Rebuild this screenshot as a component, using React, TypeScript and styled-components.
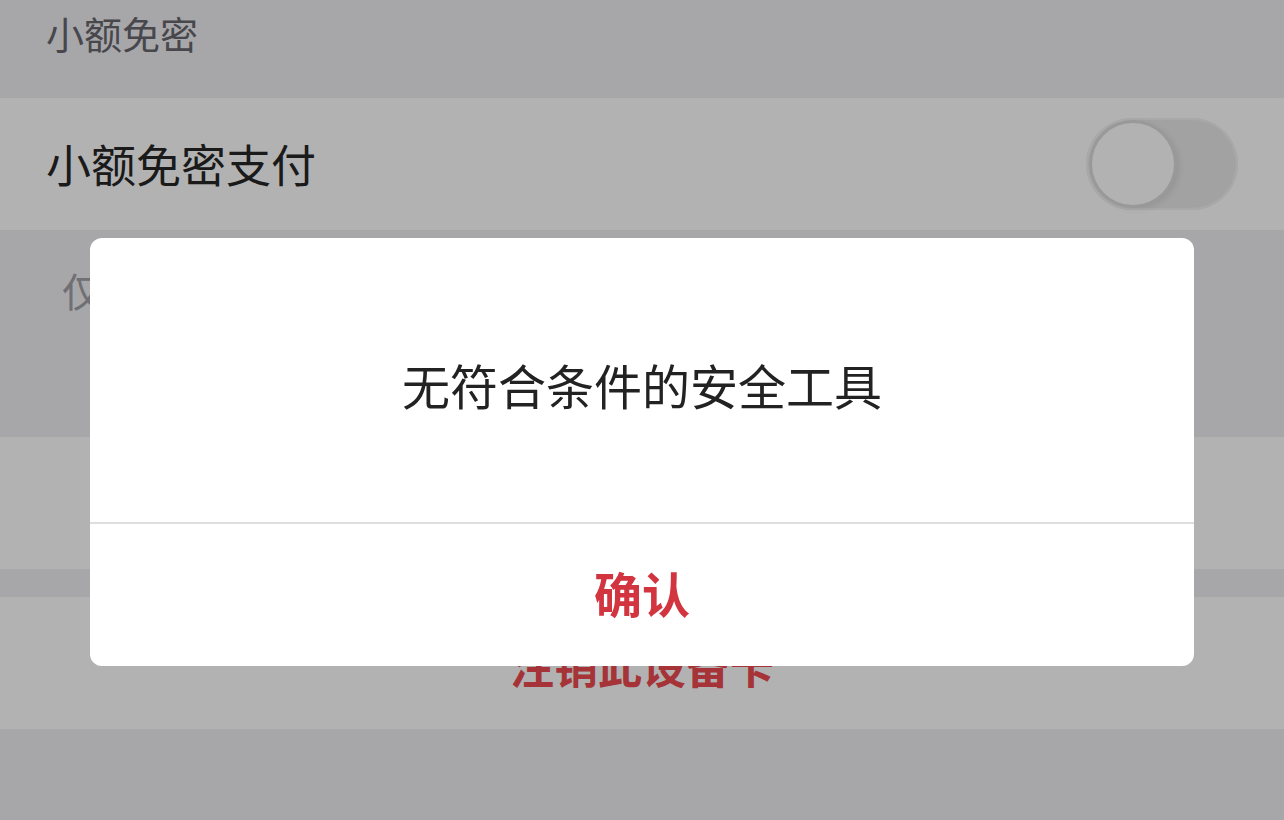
import styled, { createGlobalStyle } from "styled-components";

const colors = {
    pageBg: "#f0eff4",
    rowBg: "#ffffff",
    headerText: "#66666d",
    rowText: "#262626",
    hintText: "#a0a0a7",
    danger: "#ec4a4f",
    dialogText: "#222222",
    divider: "#dedede",
    confirm: "#d23440",
    trackOff: "#e9e9ea",
};

const GlobalStyle = createGlobalStyle`
    html, body {
        margin: 0;
        padding: 0;
        width: 1284px;
        height: 820px;
        overflow: hidden;
        background: ${colors.pageBg};
        font-family: "Noto Sans CJK SC", "Noto Sans", sans-serif;
    }
    * {
        box-sizing: border-box;
    }
`;

const Page = styled.div`
    display: flex;
    flex-direction: column;
    width: 1284px;
    height: 820px;
    background: ${colors.pageBg};
`;

const SectionHeader = styled.div`
    height: 98px;
    padding: 10px 46px 0;
    font-size: 38px;
    line-height: 46px;
    color: ${colors.headerText};
`;

const Row = styled.div<{ $centered?: boolean }>`
    height: 132px;
    padding: 0 46px;
    display: flex;
    align-items: center;
    justify-content: ${(p) => (p.$centered ? "center" : "space-between")};
    background: ${colors.rowBg};
`;

const RowLabel = styled.span`
    font-size: 45px;
    line-height: 1.2;
    color: ${colors.rowText};
`;

const DangerLabel = styled.span`
    font-size: 44px;
    font-weight: 700;
    line-height: 1.2;
    color: ${colors.danger};
    padding-top: 4px;
`;

const Hint = styled.div`
    height: 207px;
    padding: 36px 62px 0;
    font-size: 40px;
    line-height: 48px;
    color: ${colors.hintText};
`;

const Gap = styled.div`
    height: 28px;
`;

const Track = styled.div`
    position: relative;
    width: 152px;
    height: 92px;
    border-radius: 46px;
    background: ${colors.trackOff};
    box-shadow: inset 0 0 0 2px #f2f2f3;
`;

const Knob = styled.div`
    position: absolute;
    top: 5px;
    left: 6px;
    width: 82px;
    height: 82px;
    border-radius: 50%;
    background: #ffffff;
    box-shadow: 0 0 0 3px #dcdcdc, 4px 2px 8px rgba(0, 0, 0, 0.12);
`;

const Overlay = styled.div`
    position: fixed;
    inset: 0;
    background: rgba(0, 0, 0, 0.3);
    display: flex;
    flex-direction: column;
    align-items: center;
    padding-top: 238px;
`;

const Dialog = styled.div`
    width: 1104px;
    background: #ffffff;
    border-radius: 12px;
    overflow: hidden;
    display: flex;
    flex-direction: column;
`;

const Message = styled.div`
    height: 286px;
    padding-top: 8px;
    display: flex;
    align-items: center;
    justify-content: center;
    font-size: 48px;
    color: ${colors.dialogText};
    border-bottom: 2px solid ${colors.divider};
`;

const ConfirmButton = styled.button`
    height: 142px;
    border: none;
    background: transparent;
    font-family: inherit;
    font-size: 48px;
    font-weight: 700;
    color: ${colors.confirm};
    padding: 0 0 6px;
    cursor: pointer;
`;

const Switch = ({ on }: { on: boolean }) => (
    <Track aria-checked={on} role="switch">
        <Knob />
    </Track>
);

export default function App() {
    return (
        <>
            <GlobalStyle />
            <Page>
                <SectionHeader>小额免密</SectionHeader>
                <Row>
                    <RowLabel>小额免密支付</RowLabel>
                    <Switch on={false} />
                </Row>
                <Hint>仅</Hint>
                <Row />
                <Gap />
                <Row $centered>
                    <DangerLabel>注销此设备卡</DangerLabel>
                </Row>
            </Page>
            <Overlay>
                <Dialog>
                    <Message>无符合条件的安全工具</Message>
                    <ConfirmButton>确认</ConfirmButton>
                </Dialog>
            </Overlay>
        </>
    );
}
